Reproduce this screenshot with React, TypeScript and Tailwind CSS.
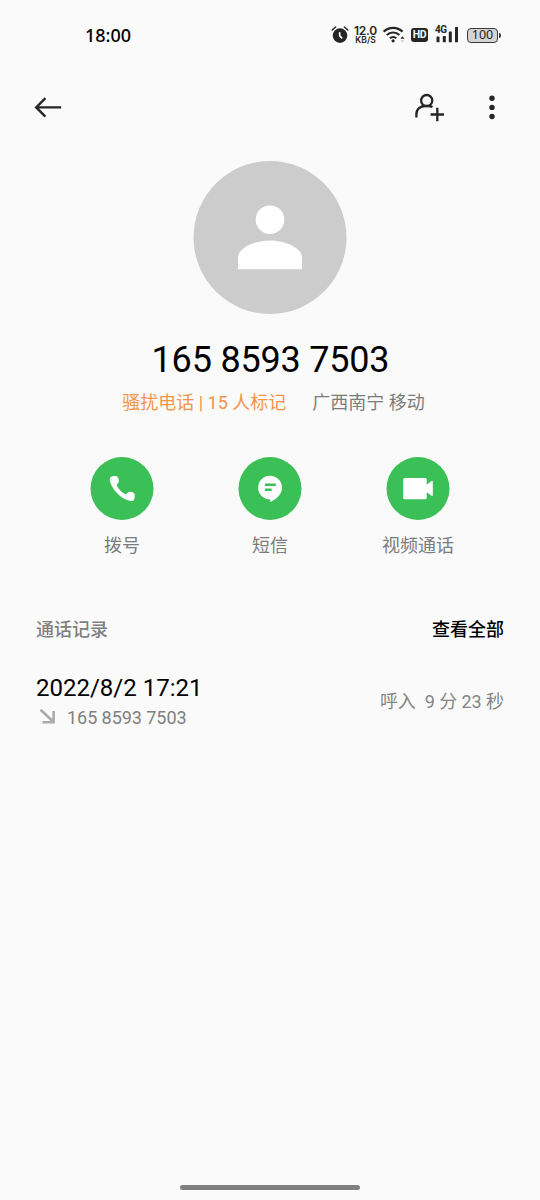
import type { ReactNode } from 'react'

function StatusBar() {
  return (
    <div className="flex h-[70px] items-center justify-between pl-[85px] pr-[39px]">
      <span className="font-['Noto_Sans'] text-[18px] font-medium leading-6 text-black">18:00</span>
      <div className="flex items-center text-[#262626]">
        <svg width="18" height="18" viewBox="0 0 18 18" fill="none">
          <circle cx="9" cy="9.6" r="7.3" fill="currentColor" />
          <path d="M1.2 4 4.6 1M16.8 4 13.4 1" stroke="currentColor" strokeWidth="1.5" strokeLinecap="round" />
          <path d="M8.7 6.8v3l2 2" stroke="#fafafa" strokeWidth="1.7" strokeLinecap="round" />
        </svg>
        <div className="ml-[5px] flex w-[23px] flex-col items-center whitespace-nowrap font-['Inter'] font-semibold">
          <span className="h-[10px] text-[12px] leading-[10px] tracking-[-0.2px]">12.0</span>
          <span className="h-[9px] text-[8.5px] leading-[9px]">KB/S</span>
        </div>
        <svg className="ml-[6px]" width="23" height="18" viewBox="0 0 23 18" fill="none">
          <path d="M.7 5.600a13.500 13.500 0 0 1 18.800 0M3.800 9a9.200 9.200 0 0 1 12.600 0M6.900 12.300a4.800 4.800 0 0 1 6.400 0" stroke="currentColor" strokeWidth="2.2" />
          <circle cx="10.1" cy="14.8" r="1.6" fill="currentColor" />
          <path d="m19.4 10.200 2 2.600h-4z" fill="currentColor" />
          <path d="m19.4 16.500 2-2.300h-4z" fill="#c9c9c9" />
        </svg>
        <span className="ml-[5px] flex h-[14px] w-[17px] items-center justify-center rounded-[3px] bg-[#262626] font-['Roboto'] text-[10.5px] font-bold leading-none tracking-[-0.3px] text-[#fafafa]">
          HD
        </span>
        <div className="relative ml-[7px] h-[18px] w-[24px]">
          <svg className="absolute inset-0" width="24" height="18" viewBox="0 0 24 18" fill="currentColor">
            <rect x="1.5" y="10.5" width="3" height="5.7" rx=".5" />
            <rect x="7.8" y="10" width="3" height="6.2" rx=".5" />
            <rect x="13.8" y="5.5" width="3" height="10.7" rx=".5" />
            <rect x="20" y="1" width="3" height="15.2" rx=".5" />
          </svg>
          <span className="absolute left-0 -top-px font-['Roboto'] text-[10px] font-bold leading-[10px] tracking-[-0.4px]">4G</span>
        </div>
        <div className="ml-[8px] flex h-[15px] w-[31px] items-center justify-center rounded-[4px] border-[1.5px] border-[#3a3a3a] bg-[#d4d4d4] font-['Noto_Sans'] text-[12.5px] leading-none text-[#262626]">
          100
        </div>
        <div className="ml-px h-[5px] w-[2px] rounded-r-sm bg-[#3a3a3a]" />
      </div>
    </div>
  )
}

function AppBar() {
  return (
    <div className="flex h-[74px] items-center justify-between pl-[34px] pr-[44px] text-[#262626]">
      <svg width="28" height="22" viewBox="0 0 28 22" fill="none" stroke="currentColor" strokeWidth="2.4">
        <path d="M2 11.400h25.200M11.400 2.200 2.200 11.400l9.200 9.200" />
      </svg>
      <div className="flex items-center">
        <svg width="32" height="30" viewBox="0 0 32 30" fill="none" stroke="currentColor" strokeWidth="2.3">
          <circle cx="14.7" cy="8.6" r="5.6" />
          <path d="M4.400 25.500v-3.400c0-5.100 4.100-8.100 8.900-8.100h2.500c1.800 0 3.300.3 4.700 1" />
          <path d="M18.600 22.500h13.400M25.300 15.800v13.400" />
        </svg>
        <svg className="ml-[44px]" width="8" height="26" viewBox="0 0 8 26" fill="currentColor">
          <circle cx="4" cy="4.3" r="2.7" />
          <circle cx="4" cy="13.4" r="2.7" />
          <circle cx="4" cy="22.5" r="2.7" />
        </svg>
      </div>
    </div>
  )
}

function Avatar() {
  return (
    <svg className="mx-auto mt-[17px]" width="154" height="153" viewBox="0 0 154 153" fill="#fff">
      <circle cx="77" cy="76.5" r="76.5" fill="#cccccc" />
      <circle cx="77" cy="58.7" r="14.3" />
      <path d="M45 108.200V96.500c0-9.800 17-17 32-17s32 7.200 32 17v11.700z" />
    </svg>
  )
}

function Action({ label, children }: { label: string; children: ReactNode }) {
  return (
    <div className="flex w-[148px] flex-col items-center">
      <svg width="64" height="64" viewBox="-0.5 0 64 64" fill="#fff">
        <circle cx="31.5" cy="31.5" r="31.5" fill="#3bbf57" />
        {children}
      </svg>
      <span className="mt-[13px] text-[18px] leading-6 text-[#7c7c7c]">{label}</span>
    </div>
  )
}

export default function App() {
  return (
    <div className="flex h-[1200px] w-[540px] flex-col overflow-hidden bg-[#fafafa] font-['Roboto','Noto_Sans_CJK_SC',sans-serif]">
      <StatusBar />
      <AppBar />
      <Avatar />

      <h1 className="mt-6 pl-px text-center text-[36px] leading-[44px] tracking-[-0.2px] text-black">165 8593 7503</h1>
      <div className="mt-[9px] flex justify-center gap-[26px] pl-[7px] text-[18px] leading-6">
        <span className="text-[#f4944a]">骚扰电话 | 15 人标记</span>
        <span className="text-[#7c7c7c]">广西南宁 移动</span>
      </div>

      <div className="mt-[42px] flex justify-center">
        <Action label="拨号">
          <path d="M20.200 20.100c1.500-1.200 4.600-1.600 6.100-.8 1.600.9 2.500 4 2 5.800-.3 1.200-1.700 2-2.300 3 1.700 3.900 5.200 7.500 9.300 9.300 1-.7 1.700-2 3-2.500 1.800-.6 4.700.3 5.700 1.900.5.900.2 5.100-.6 6.200-.9 1.300-3.700 1.100-5.500.5C29 40.600 21.800 32.300 19.500 24.500c-.5-1.700-.4-3.500.7-4.400z" />
        </Action>
        <Action label="短信">
          <path d="M31.500 18.800a12 12 0 0 1 12 12c0 6.600-5.300 11-11.700 14.400v-2.600h-.3a11.900 11.900 0 0 1 0-23.800z" />
          <path d="M26.500 27.700h10.800M26.500 32.800h6.600" stroke="#3bbf57" strokeWidth="2.4" />
        </Action>
        <Action label="视频通话">
          <path d="M18.200 20.900h20.500a1.500 1.500 0 0 1 1.500 1.500v5.300l4.800-3.600c.7-.5 1.300-.2 1.300.6v13.500c0 .8-.6 1.100-1.300.5l-4.800-3.500v5.500a1.500 1.500 0 0 1-1.500 1.500H18.200a1.500 1.500 0 0 1-1.500-1.500V22.400a1.500 1.500 0 0 1 1.500-1.500z" />
        </Action>
      </div>

      <div className="mt-[60px] flex items-center justify-between px-9 text-[18px] font-medium leading-6">
        <span className="text-[#808080]">通话记录</span>
        <span className="text-black">查看全部</span>
      </div>

      <div className="mt-[31px] flex items-center justify-between px-9">
        <div>
          <div className="text-[24px] leading-[30px] text-black">2022/8/2 17:21</div>
          <div className="mt-[3px] flex items-center text-[18px] leading-6 tracking-[-0.05px] text-[#808080]">
            <svg className="mr-[7px]" width="24" height="24" viewBox="0 0 24 24" fill="none" stroke="#aaaaaa" strokeWidth="2.6">
              <path d="m4.600 3.700 13 12.300M6.400 16.200h11.200V5" />
            </svg>
            165 8593 7503
          </div>
        </div>
        <span className="whitespace-pre text-[18px] leading-6 tracking-[-0.05px] text-[#858585]">呼入  9 分 23 秒</span>
      </div>

      <div className="mx-auto mb-[10px] mt-auto h-[5px] w-[180px] rounded-full bg-[#808080]" />
    </div>
  )
}
